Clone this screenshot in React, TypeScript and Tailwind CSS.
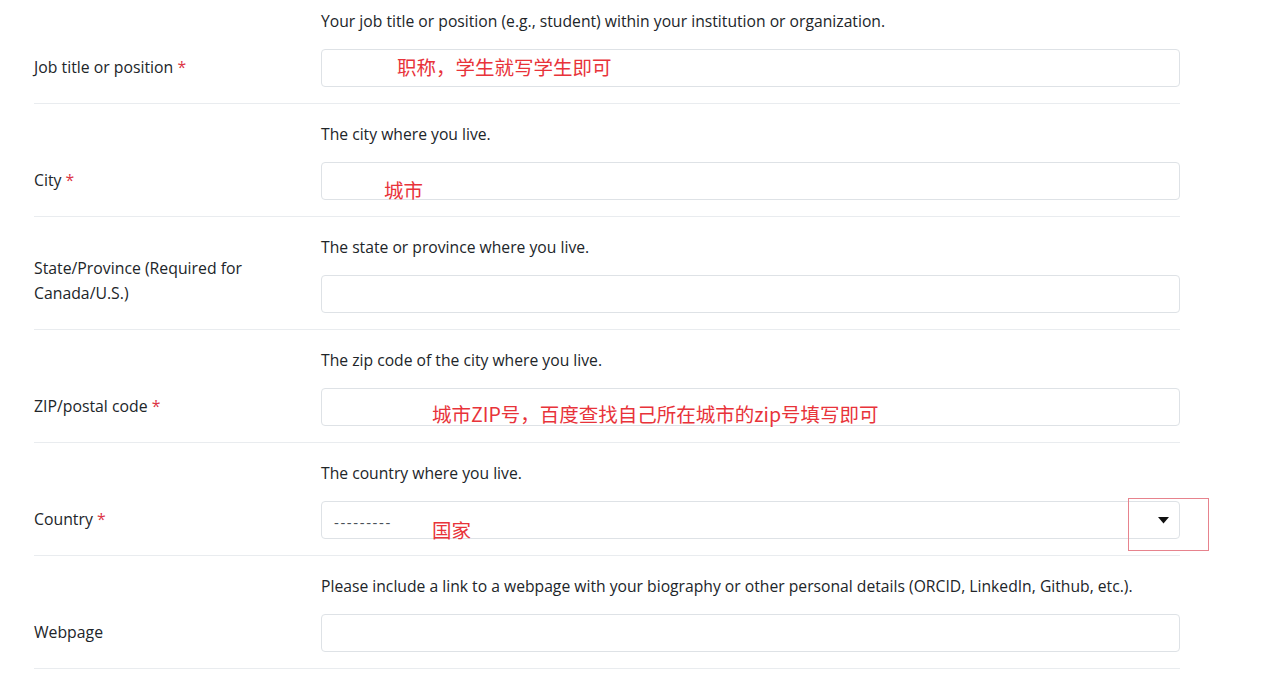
import React from 'react';

const FONT = "font-['Segoe_UI','Open_Sans','Noto_Sans',sans-serif]";
const CJK = "font-['Noto_Sans_CJK_SC',sans-serif]";

type Row = {
  label: React.ReactNode;
  help: string;
  required?: boolean;
  note?: { text: string; left: string; top: string };
  select?: boolean;
};

const ROWS: Row[] = [
  {
    label: 'Job title or position',
    required: true,
    help: 'Your job title or position (e.g., student) within your institution or organization.',
    note: { text: '职称，学生就写学生即可', left: 'left-[75px]', top: 'top-[4px]' },
  },
  {
    label: 'City',
    required: true,
    help: 'The city where you live.',
    note: { text: '城市', left: 'left-[62px]', top: 'top-[14px]' },
  },
  {
    label: (
      <>
        State/Province (Required for
        <br />
        Canada/U.S.)
      </>
    ),
    help: 'The state or province where you live.',
  },
  {
    label: 'ZIP/postal code',
    required: true,
    help: 'The zip code of the city where you live.',
    note: { text: '城市ZIP号，百度查找自己所在城市的zip号填写即可', left: 'left-[110px]', top: 'top-[12px]' },
  },
  {
    label: 'Country',
    required: true,
    help: 'The country where you live.',
    select: true,
    note: { text: '国家', left: 'left-[110px]', top: 'top-[15px]' },
  },
  {
    label: 'Webpage',
    help: 'Please include a link to a webpage with your biography or other personal details (ORCID, LinkedIn, Github, etc.).',
  },
];

function FormRow({ row }: { row: Row }) {
  return (
    <div className="flex items-end border-b border-[#e9ecef] pt-[18px] pb-4">
      <label className="w-[287px] shrink-0 pb-[7px] text-[15.8px] leading-[25px] text-[#212529]">
        {row.label}
        {row.required && <span className="text-[#dc3545]"> *</span>}
      </label>
      <div className="flex-1">
        <div className="mb-[16px] text-[15.7px] leading-6 text-[#212529]">{row.help}</div>
        <div className="relative h-[38px] rounded border border-[#dee2e6] bg-white">
          {row.select && (
            <>
              <span className="absolute left-3 top-[8px] text-[15px] leading-6 tracking-[1.6px] text-[#495057]">---------</span>
              <svg className="absolute right-[10px] top-[15px]" width="11" height="7" viewBox="0 0 11 7">
                <path d="M0 0 L11 0 L5.5 6.5 Z" fill="#111" />
              </svg>
              <div className="absolute left-[806px] top-[-4px] h-[53px] w-[81px] border border-[#e7838d]" />
            </>
          )}
          {row.note && (
            <span
              className={`absolute ${row.note.left} ${row.note.top} ${CJK} whitespace-nowrap text-[19.5px] leading-[26px] text-[#e8333a]`}
            >
              {row.note.text}
            </span>
          )}
        </div>
      </div>
    </div>
  );
}

export default function App() {
  return (
    <div className={`h-[684px] w-[1280px] overflow-hidden bg-white ${FONT}`}>
      <div className="-mt-[9px] ml-[34px] w-[1146px]">
        {ROWS.map((r, i) => (
          <FormRow key={i} row={r} />
        ))}
      </div>
    </div>
  );
}
